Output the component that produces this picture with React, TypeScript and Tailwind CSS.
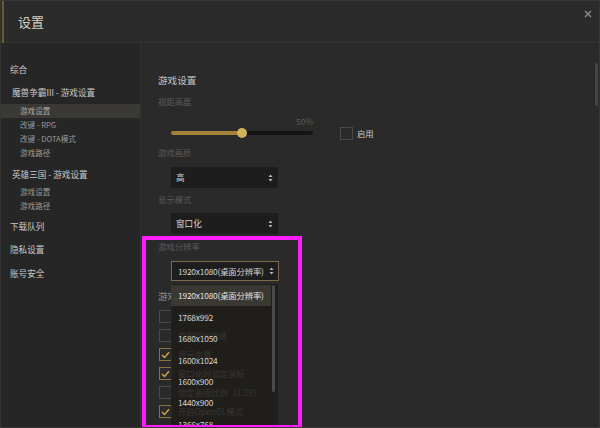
import React from "react";

const FONT = { fontFamily: '"Noto Sans CJK SC", "Noto Sans", sans-serif' };

function Arrows() {
  return (
    <svg width="5" height="8" viewBox="0 0 5 8" className="shrink-0">
      <path d="M2.5 0.5 L4.5 3 L0.5 3 Z" fill="#bbbbbb" />
      <path d="M2.5 7.5 L4.5 5 L0.5 5 Z" fill="#bbbbbb" />
    </svg>
  );
}

function Check({ checked }: { checked: boolean }) {
  return (
    <div
      className={
        "w-[13px] h-[13px] border flex items-center justify-center shrink-0 " +
        (checked ? "border-[#8a7140]" : "border-[#4a4a4a]")
      }
    >
      {checked && (
        <svg width="9" height="8" viewBox="0 0 9 8">
          <path d="M1 4 L3.5 6.5 L8 1.2" stroke="#d2a845" strokeWidth="1.4" fill="none" />
        </svg>
      )}
    </div>
  );
}

const sideMain = "h-[20px] flex items-center text-[8.6px] text-[#c9c9c9] whitespace-nowrap";
const sideSub = "h-[14px] flex items-center pl-[19px] text-[7.6px] text-[#9a9a9a] whitespace-nowrap";
const dimLabel = "h-[14px] flex items-center text-[8.4px] text-[#5b5b5b]";

export default function App() {
  const options = ["1920x1080(桌面分辨率)", "1768x992", "1680x1050", "1600x1024", "1600x900", "1440x900", "1366x768"];
  const rows: [string, boolean][] = [
    ["宽屏模式", false],
    ["禁用Win按键", false],
    ["显示血量", true],
    ["窗口化时锁定鼠标", true],
    ["锁定画面比例（1.29）", false],
    ["开启OpenGL模式", true],
  ];
  return (
    <div style={FONT} className="relative w-[600px] h-[428px] overflow-hidden bg-[#2a2a2a] border border-[#363636] flex flex-col">
      {/* header */}
      <div className="relative h-[42px] shrink-0 bg-[#2b2b2b] border-b border-[#353535] flex items-center pl-[17px]">
        <div className="absolute left-[1px] top-0 w-[2px] h-[42px] bg-[#6e5a33]" />
        <span className="text-[13px] text-[#d6cfbd]">设置</span>
        <div className="absolute right-[7px] top-[9px]">
          <svg width="8" height="8" viewBox="0 0 8 8">
            <path d="M1 1 L7 7 M7 1 L1 7" stroke="#8c8c8c" strokeWidth="1.3" />
          </svg>
        </div>
      </div>

      <div className="flex flex-1 min-h-0">
        {/* sidebar */}
        <div className="w-[140px] shrink-0 bg-[#262626] border-r border-[#333333] flex flex-col pt-[16px] pl-[9px]">
          <div className={sideMain}>综合</div>
          <div className={sideMain + " mt-[3px] pl-[2px]"}>魔兽争霸III - 游戏设置</div>
          <div className="-ml-[9px] flex flex-col mt-[2px]">
            <div className={sideSub + " bg-[#3a3936] text-[#a8a8a8]"}>游戏设置</div>
            <div className={sideSub}>改键 - RPG</div>
            <div className={sideSub}>改键 - DOTA模式</div>
            <div className={sideSub}>游戏路径</div>
          </div>
          <div className={sideMain + " mt-[4px] pl-[2px]"}>英雄三国 - 游戏设置</div>
          <div className="-ml-[9px] flex flex-col mt-[1px]">
            <div className={sideSub}>游戏设置</div>
            <div className={sideSub}>游戏路径</div>
          </div>
          <div className={sideMain + " mt-[3px]"}>下载队列</div>
          <div className={sideMain + " mt-[3px]"}>隐私设置</div>
          <div className={sideMain + " mt-[4px]"}>账号安全</div>
        </div>

        {/* content */}
        <div className="relative flex-1 pl-[17px] pt-[29px]">
          <div className="absolute right-[1px] top-[20px] w-[3px] h-[43px] bg-[#454545] rounded-sm" />
          <div className="h-[16px] flex items-center text-[9.6px] text-[#c2c2c2]">游戏设置</div>
          <div className={dimLabel + " mt-[6px]"}>视距高度</div>

          <div className="flex items-end mt-[7px]">
            <div className="flex flex-col ml-[13px] w-[142px]">
              <div className="h-[12px] flex items-center justify-end text-[8.4px] text-[#5e5e5e]">50%</div>
              <div className="relative h-[12px] flex items-center">
                <div className="w-full h-[4px] rounded-full bg-[#141414]" />
                <div className="absolute left-0 top-[4px] w-[71px] h-[4px] rounded-full bg-[#a68238]" />
                <div className="absolute left-[66px] top-[1px] w-[10px] h-[10px] rounded-full bg-[#d3b05a]" />
              </div>
            </div>
            <div className="flex items-center ml-[27px] mb-[-1px]">
              <Check checked={false} />
              <span className="ml-[4px] text-[8.4px] text-[#c8c8c8]">启用</span>
            </div>
          </div>

          <div className={dimLabel + " mt-[6px]"}>游戏画质</div>
          <div className="ml-[13px] mt-[8px] w-[107px] h-[21px] bg-[#1d1d1d] flex items-center justify-between px-[5px] text-[8.6px] text-[#d0d0d0]">
            <span>高</span>
            <Arrows />
          </div>
          <div className={dimLabel + " mt-[4px]"}>显示模式</div>
          <div className="ml-[13px] mt-[7px] w-[107px] h-[21px] bg-[#1d1d1d] flex items-center justify-between px-[5px] text-[8.6px] text-[#d0d0d0]">
            <span>窗口化</span>
            <Arrows />
          </div>
          <div className={dimLabel + " mt-[5px]"}>游戏分辨率</div>

          <div className="ml-[13px] mt-[8px] w-[108px] h-[20px] bg-[#1d1d1d] border border-[#7d6a44] flex items-center justify-between pl-[6px] pr-[4px] text-[8.4px] tracking-[-0.2px] text-[#d4d4d4]">
            <span className="whitespace-nowrap">1920x1080(桌面分辨率)</span>
            <Arrows />
          </div>

          <div className="h-[16px] mt-[7px] flex items-center text-[9.6px] text-[#8c8c8c]">游戏选项</div>
          <div className="flex flex-col mt-[3px] ml-[1px]">
            {rows.map(([label, c], i) => (
              <div key={i} className="h-[19px] flex items-center">
                <Check checked={c} />
                <span className="ml-[6px] text-[8.4px] text-[#c8c8c8] whitespace-nowrap">{label}</span>
              </div>
            ))}
          </div>

          {/* dropdown list */}
          <div className="absolute left-[30px] top-[241px] w-[107px] h-[150px] bg-[rgba(30,28,24,0.86)] flex flex-col">
            <div className="absolute right-[3px] top-[1px] w-[3px] h-[107px] bg-[#4a4a4a] rounded-sm" />
            {options.map((o, i) => (
              <div
                key={o}
                className={
                  "h-[21.4px] shrink-0 flex items-center pl-[7px] text-[8.4px] tracking-[-0.2px] whitespace-nowrap " +
                  (i === 0 ? "bg-[#3a3833] text-[#e2e2e2] mt-[1px] mr-[7px]" : "text-[#cfcfcf]")
                }
              >
                {o}
              </div>
            ))}
          </div>
        </div>
      </div>

      {/* annotation box */}
      <div className="absolute left-[141px] top-[235px] w-[160px] h-[193px] border-[4px] border-[#ff1dff] pointer-events-none" />
    </div>
  );
}
